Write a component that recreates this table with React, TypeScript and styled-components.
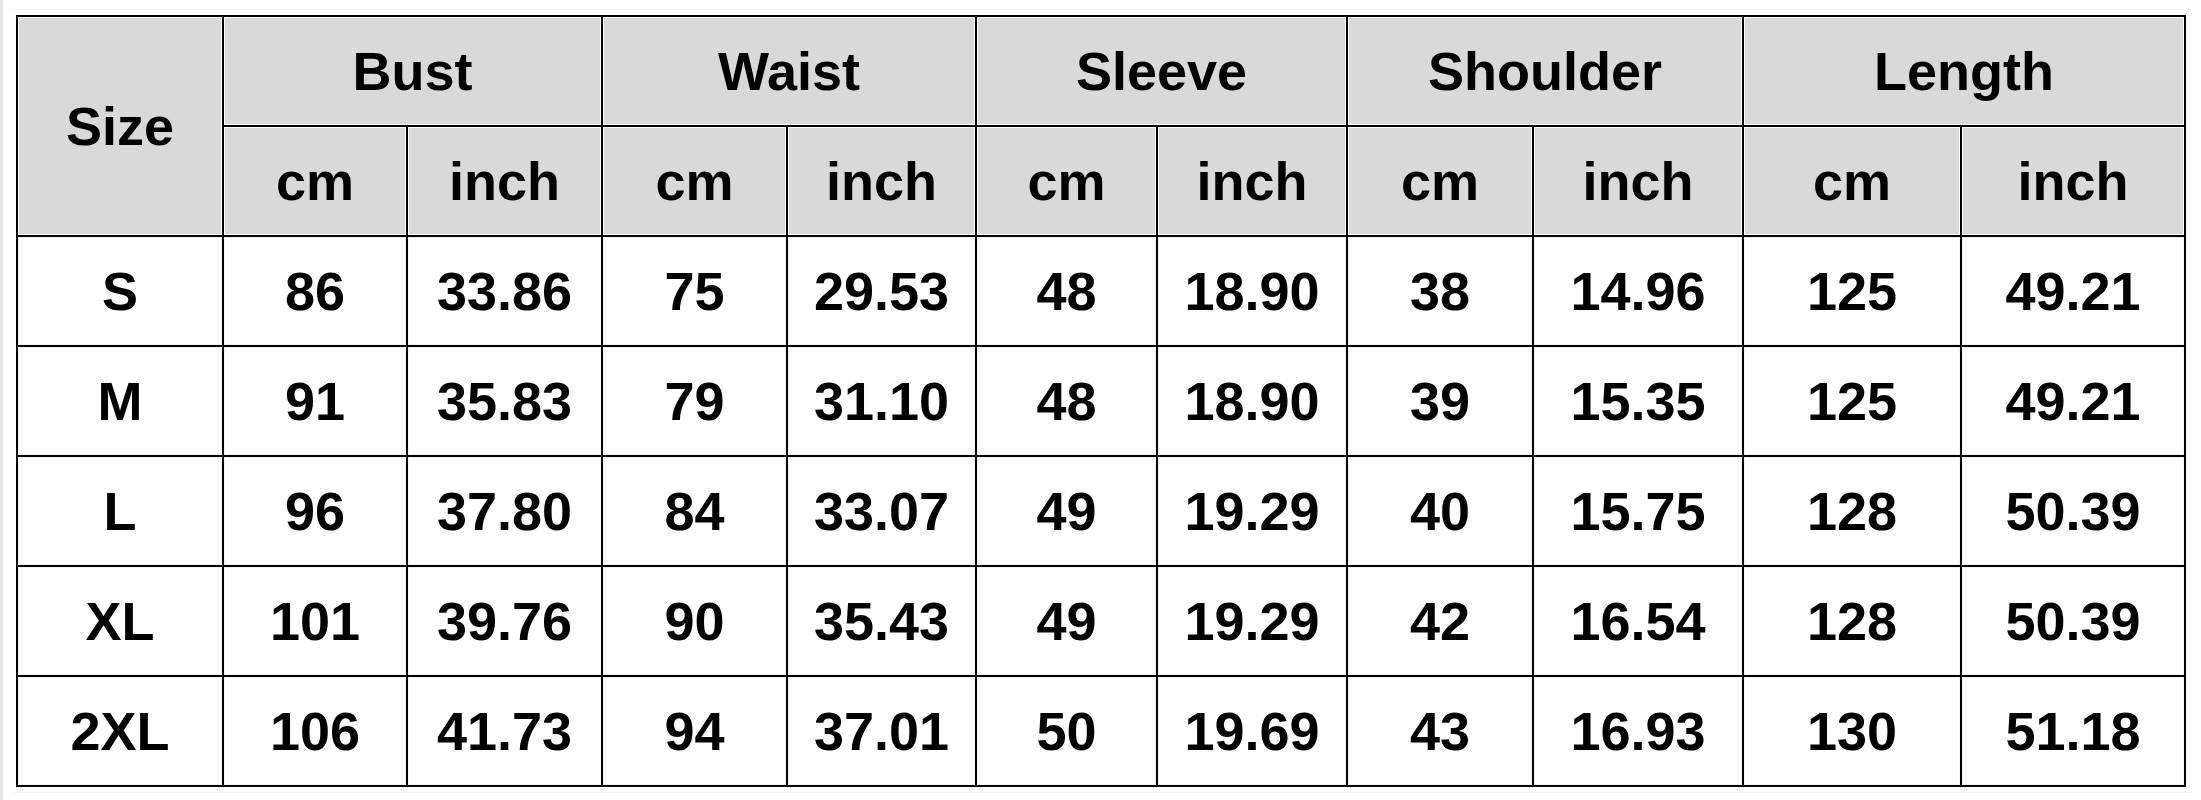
import React from "react";
import styled, { createGlobalStyle } from "styled-components";

const GlobalStyle = createGlobalStyle`
  html, body {
    margin: 0;
    padding: 0;
    background: #fff;
  }
  body {
    font-family: "Liberation Sans", Arial, sans-serif;
  }
`;

const columns = [206, 184, 195, 185, 189, 181, 190, 186, 210, 218, 224];

const groups = ["Bust", "Waist", "Sleeve", "Shoulder", "Length"];

const rows = [
  ["S", "86", "33.86", "75", "29.53", "48", "18.90", "38", "14.96", "125", "49.21"],
  ["M", "91", "35.83", "79", "31.10", "48", "18.90", "39", "15.35", "125", "49.21"],
  ["L", "96", "37.80", "84", "33.07", "49", "19.29", "40", "15.75", "128", "50.39"],
  ["XL", "101", "39.76", "90", "35.43", "49", "19.29", "42", "16.54", "128", "50.39"],
  ["2XL", "106", "41.73", "94", "37.01", "50", "19.69", "43", "16.93", "130", "51.18"],
];

const App: React.FC = () => {
  return (
    <>
      <GlobalStyle />
      <Page>
        <Frame>
          <Table>
            <colgroup>
              {columns.map((w, i) => (
                <col key={i} style={{ width: w }} />
              ))}
            </colgroup>
            <thead>
              <Row>
                <HeadCell rowSpan={2}>Size</HeadCell>
                {groups.map((g) => (
                  <HeadCell key={g} colSpan={2}>
                    {g}
                  </HeadCell>
                ))}
              </Row>
              <Row>
                {groups.map((g) => (
                  <React.Fragment key={g}>
                    <HeadCell>cm</HeadCell>
                    <HeadCell>inch</HeadCell>
                  </React.Fragment>
                ))}
              </Row>
            </thead>
            <tbody>
              {rows.map((r) => (
                <Row key={r[0]}>
                  {r.map((v, i) => (
                    <Cell key={i}>{v}</Cell>
                  ))}
                </Row>
              ))}
            </tbody>
          </Table>
        </Frame>
      </Page>
    </>
  );
};

const Page = styled.div`
  width: 2201px;
  height: 800px;
  box-sizing: border-box;
  border-left: 3px solid #e4e4e4;
  padding: 9px 0 0 0;
`;

const Frame = styled.div`
  border-top: 1px solid #f0f0f0;
  border-bottom: 1px solid #f0f0f0;
  margin-left: 10px;
  width: 2176px;
  padding: 5px 0 5px 3px;
`;

const Table = styled.table`
  border-collapse: collapse;
  table-layout: fixed;
  width: 2170px;
  border: 2px solid #000;
`;

const Row = styled.tr`
  height: 110px;
`;

const HeadCell = styled.th`
  border: 2px solid #000;
  background: #d9d9d9;
  box-shadow: inset 0 0 0 1px #fff;
  color: #000;
  font-size: 54px;
  font-weight: 700;
  text-align: center;
  vertical-align: middle;
  padding: 0;
`;

const Cell = styled.td`
  border: 2px solid #000;
  background: #fff;
  box-shadow: inset 0 0 0 1px #f3f3f3;
  color: #000;
  font-size: 54px;
  font-weight: 700;
  text-align: center;
  vertical-align: middle;
  padding: 0;
`;

export default App;
